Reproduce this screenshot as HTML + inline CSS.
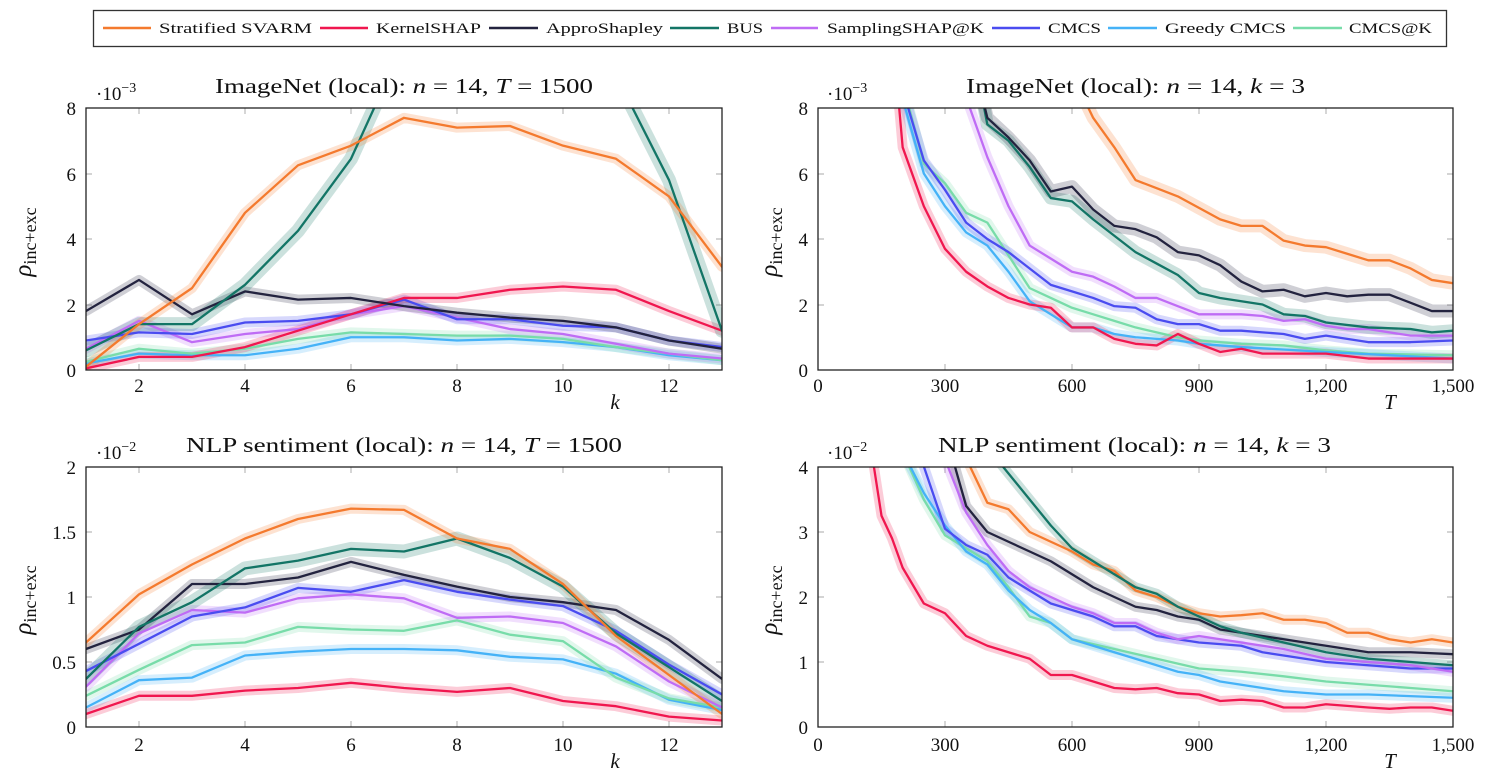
<!DOCTYPE html>
<html><head><meta charset="utf-8"><style>
body{margin:0;background:#fff;width:1499px;height:776px;overflow:hidden}
svg{display:block;font-family:"Liberation Serif",serif}
defs polyline{fill:none;vector-effect:non-scaling-stroke;stroke-linejoin:round;stroke-linecap:round}
.b{fill:none;stroke-width:10;stroke-opacity:.22}
.l{fill:none;stroke-width:2.3}
.tk{stroke:#bbb;stroke-width:1.2}
.ax{fill:none;stroke:#222;stroke-width:1.3}
.t{font-size:19px;fill:#111}
.ti{font-size:21px;fill:#111}
.lg{font-size:15px;fill:#111}
</style></head><body>
<svg width="1499" height="776" viewBox="0 0 1499 776">
<defs>
<clipPath id="c1"><rect x="86" y="108" width="636" height="262"/></clipPath>
<clipPath id="c2"><rect x="818" y="108" width="635" height="262"/></clipPath>
<clipPath id="c3"><rect x="86" y="467" width="636" height="260"/></clipPath>
<clipPath id="c4"><rect x="818" y="467" width="635" height="260"/></clipPath>
</defs>

<!-- legend -->
<rect x="93.5" y="10.5" width="1353" height="36" fill="#fff" stroke="#333" stroke-width="1.3"/>
<g stroke-width="2.5">
<line x1="103" y1="28" x2="151" y2="28" stroke="#f47a2e"/>
<line x1="320" y1="28" x2="368" y2="28" stroke="#f0174f"/>
<line x1="489" y1="28" x2="538" y2="28" stroke="#23233f"/>
<line x1="670" y1="28" x2="719" y2="28" stroke="#137566"/>
<line x1="771" y1="28" x2="818" y2="28" stroke="#bf6cf5"/>
<line x1="992" y1="28" x2="1040" y2="28" stroke="#4a4cf0"/>
<line x1="1108" y1="28" x2="1157" y2="28" stroke="#45b2f7"/>
<line x1="1293" y1="28" x2="1342" y2="28" stroke="#78dca9"/>
</g>
<g class="lg">
<text x="159" y="33" textLength="153" lengthAdjust="spacingAndGlyphs">Stratified SVARM</text>
<text x="376" y="33" textLength="105" lengthAdjust="spacingAndGlyphs">KernelSHAP</text>
<text x="546" y="33" textLength="117" lengthAdjust="spacingAndGlyphs">ApproShapley</text>
<text x="727" y="33" textLength="36" lengthAdjust="spacingAndGlyphs">BUS</text>
<text x="827" y="33" textLength="157" lengthAdjust="spacingAndGlyphs">SamplingSHAP@K</text>
<text x="1048" y="33" textLength="53" lengthAdjust="spacingAndGlyphs">CMCS</text>
<text x="1165" y="33" textLength="121" lengthAdjust="spacingAndGlyphs">Greedy CMCS</text>
<text x="1349" y="33" textLength="83" lengthAdjust="spacingAndGlyphs">CMCS@K</text>
</g>

<!-- titles -->
<text class="ti" x="215" y="93" textLength="378" lengthAdjust="spacingAndGlyphs">ImageNet (local): <tspan font-style="italic">n</tspan> = 14, <tspan font-style="italic">T</tspan> = 1500</text>
<text class="ti" x="966" y="93" textLength="339" lengthAdjust="spacingAndGlyphs">ImageNet (local): <tspan font-style="italic">n</tspan> = 14, <tspan font-style="italic">k</tspan> = 3</text>
<text class="ti" x="186" y="452" textLength="436" lengthAdjust="spacingAndGlyphs">NLP sentiment (local): <tspan font-style="italic">n</tspan> = 14, <tspan font-style="italic">T</tspan> = 1500</text>
<text class="ti" x="938" y="452" textLength="393" lengthAdjust="spacingAndGlyphs">NLP sentiment (local): <tspan font-style="italic">n</tspan> = 14, <tspan font-style="italic">k</tspan> = 3</text>
<text class="t" x="96" y="100">·10<tspan font-size="14" dy="-8">−3</tspan></text>
<text class="t" x="827" y="100">·10<tspan font-size="14" dy="-8">−3</tspan></text>
<text class="t" x="96" y="459">·10<tspan font-size="14" dy="-8">−2</tspan></text>
<text class="t" x="827" y="459">·10<tspan font-size="14" dy="-8">−2</tspan></text>

<!-- y labels -->
<g class="t">
<text transform="translate(31,242) rotate(-90)" text-anchor="middle" font-style="italic" font-size="25">ρ<tspan font-style="normal" font-size="18" dy="5">inc+exc</tspan></text>
<text transform="translate(777,242) rotate(-90)" text-anchor="middle" font-style="italic" font-size="25">ρ<tspan font-style="normal" font-size="18" dy="5">inc+exc</tspan></text>
<text transform="translate(31,600) rotate(-90)" text-anchor="middle" font-style="italic" font-size="25">ρ<tspan font-style="normal" font-size="18" dy="5">inc+exc</tspan></text>
<text transform="translate(777,600) rotate(-90)" text-anchor="middle" font-style="italic" font-size="25">ρ<tspan font-style="normal" font-size="18" dy="5">inc+exc</tspan></text>
</g>

<!-- tick labels -->
<g class="t" text-anchor="end">
<text x="76" y="115">8</text><text x="76" y="181">6</text><text x="76" y="246">4</text><text x="76" y="312">2</text><text x="76" y="377">0</text>
<text x="808" y="115">8</text><text x="808" y="181">6</text><text x="808" y="246">4</text><text x="808" y="312">2</text><text x="808" y="377">0</text>
<text x="76" y="474">2</text><text x="76" y="539">1.5</text><text x="76" y="604">1</text><text x="76" y="669">0.5</text><text x="76" y="734">0</text>
<text x="808" y="474">4</text><text x="808" y="539">3</text><text x="808" y="604">2</text><text x="808" y="669">1</text><text x="808" y="734">0</text>
</g>
<g class="t" text-anchor="middle">
<text x="139" y="392">2</text><text x="245" y="392">4</text><text x="351" y="392">6</text><text x="457" y="392">8</text><text x="563" y="392">10</text><text x="669" y="392">12</text>
<text x="139" y="751">2</text><text x="245" y="751">4</text><text x="351" y="751">6</text><text x="457" y="751">8</text><text x="563" y="751">10</text><text x="669" y="751">12</text>
<text x="818" y="392">0</text><text x="945" y="392">300</text><text x="1072" y="392">600</text><text x="1199" y="392">900</text><text x="1326" y="392">1,200</text><text x="1453" y="392">1,500</text>
<text x="818" y="751">0</text><text x="945" y="751">300</text><text x="1072" y="751">600</text><text x="1199" y="751">900</text><text x="1326" y="751">1,200</text><text x="1453" y="751">1,500</text>
<text x="615" y="409" font-style="italic" font-size="21">k</text>
<text x="615" y="768" font-style="italic" font-size="21">k</text>
<text x="1390" y="409" font-style="italic" font-size="21">T</text>
<text x="1390" y="768" font-style="italic" font-size="21">T</text>
</g>

<!-- ticks -->
<g class="tk">
<path d="M139 108v6M245 108v6M351 108v6M457 108v6M563 108v6M669 108v6M139 370v-6M245 370v-6M351 370v-6M457 370v-6M563 370v-6M669 370v-6M86 174h6M86 239h6M86 305h6M722 174h-6M722 239h-6M722 305h-6"/>
<path d="M139 467v6M245 467v6M351 467v6M457 467v6M563 467v6M669 467v6M139 727v-6M245 727v-6M351 727v-6M457 727v-6M563 727v-6M669 727v-6M86 532h6M86 597h6M86 662h6M722 532h-6M722 597h-6M722 662h-6"/>
<path d="M945 108v6M1072 108v6M1199 108v6M1326 108v6M945 370v-6M1072 370v-6M1199 370v-6M1326 370v-6M818 174h6M818 239h6M818 305h6M1453 174h-6M1453 239h-6M1453 305h-6"/>
<path d="M945 467v6M1072 467v6M1199 467v6M1326 467v6M945 727v-6M1072 727v-6M1199 727v-6M1326 727v-6M818 532h6M818 597h6M818 662h6M1453 532h-6M1453 597h-6M1453 662h-6"/>
</g>

<defs>
<polyline id="a1" fill="none" vector-effect="non-scaling-stroke" points="1,0.1 2,1.4 3,2.5 4,4.8 5,6.25 6,6.85 7,7.7 8,7.4 9,7.45 10,6.85 11,6.45 12,5.3 13,3.15"/>
<polyline id="a2" fill="none" vector-effect="non-scaling-stroke" points="1,0.05 2,0.4 3,0.4 4,0.7 5,1.2 6,1.7 7,2.2 8,2.2 9,2.45 10,2.55 11,2.45 12,1.8 13,1.2"/>
<polyline id="a3" fill="none" vector-effect="non-scaling-stroke" points="1,1.8 2,2.75 3,1.7 4,2.4 5,2.15 6,2.2 7,1.95 8,1.75 9,1.6 10,1.5 11,1.3 12,0.9 13,0.65"/>
<polyline id="a4" fill="none" vector-effect="non-scaling-stroke" points="1,0.6 2,1.4 3,1.4 4,2.6 5,4.25 6,6.45 7,10 8,12 9,12 10,12 10.5,11 11,9 12,5.8 13,1.2"/>
<polyline id="a5" fill="none" vector-effect="non-scaling-stroke" points="1,0.65 2,1.5 3,0.85 4,1.1 5,1.25 6,1.7 7,1.95 8,1.6 9,1.25 10,1.1 11,0.8 12,0.5 13,0.35"/>
<polyline id="a6" fill="none" vector-effect="non-scaling-stroke" points="1,0.9 2,1.15 3,1.1 4,1.45 5,1.5 6,1.7 7,2.15 8,1.55 9,1.55 10,1.35 11,1.3 12,0.9 13,0.7"/>
<polyline id="a7" fill="none" vector-effect="non-scaling-stroke" points="1,0.2 2,0.5 3,0.45 4,0.45 5,0.65 6,1.0 7,1.0 8,0.9 9,0.95 10,0.85 11,0.7 12,0.45 13,0.3"/>
<polyline id="a8" fill="none" vector-effect="non-scaling-stroke" points="1,0.25 2,0.65 3,0.5 4,0.65 5,0.95 6,1.15 7,1.1 8,1.05 9,1.05 10,0.95 11,0.7 12,0.5 13,0.3"/>

<polyline id="b1" fill="none" vector-effect="non-scaling-stroke" points="620,8.5 650,7.7 700,6.8 750,5.8 800,5.55 850,5.3 900,4.95 950,4.6 1000,4.4 1050,4.4 1100,3.95 1150,3.8 1200,3.75 1250,3.55 1300,3.35 1350,3.35 1400,3.1 1450,2.75 1500,2.65"/>
<polyline id="b2" fill="none" vector-effect="non-scaling-stroke" points="185,9 200,6.8 250,5 300,3.7 350,3.0 400,2.55 450,2.2 500,2.0 550,1.9 600,1.3 650,1.3 700,0.95 750,0.8 800,0.75 850,1.1 900,0.8 950,0.55 1000,0.65 1050,0.5 1100,0.5 1200,0.5 1300,0.35 1400,0.35 1500,0.35"/>
<polyline id="b3" fill="none" vector-effect="non-scaling-stroke" points="385,8.5 400,7.7 450,7.1 500,6.4 550,5.45 600,5.6 650,4.9 700,4.4 750,4.3 800,4.05 850,3.6 900,3.5 950,3.2 1000,2.7 1050,2.4 1100,2.45 1150,2.25 1200,2.35 1250,2.25 1300,2.3 1350,2.3 1400,2.05 1450,1.8 1500,1.8"/>
<polyline id="b4" fill="none" vector-effect="non-scaling-stroke" points="385,8.5 400,7.5 450,7 500,6.2 550,5.25 600,5.15 650,4.6 700,4.1 750,3.6 800,3.25 850,2.9 900,2.35 950,2.2 1000,2.1 1050,2.0 1100,1.7 1150,1.65 1200,1.45 1300,1.3 1400,1.25 1450,1.15 1500,1.2"/>
<polyline id="b5" fill="none" vector-effect="non-scaling-stroke" points="345,8.5 400,6.5 450,5 500,3.8 550,3.4 600,3.0 650,2.85 700,2.55 750,2.2 800,2.2 850,1.95 900,1.7 1000,1.7 1050,1.65 1100,1.5 1150,1.55 1200,1.35 1250,1.25 1300,1.25 1400,1.05 1500,1.05"/>
<polyline id="b6" fill="none" vector-effect="non-scaling-stroke" points="190,9 250,6.4 300,5.5 350,4.5 400,4.0 450,3.6 500,3.1 550,2.6 600,2.4 650,2.2 700,1.95 750,1.9 800,1.55 850,1.4 900,1.4 950,1.2 1000,1.2 1050,1.15 1100,1.1 1150,0.95 1200,1.05 1250,0.95 1300,0.85 1400,0.85 1500,0.9"/>
<polyline id="b7" fill="none" vector-effect="non-scaling-stroke" points="195,8.5 250,6 300,5 350,4.2 400,3.8 450,3.0 500,2.1 550,1.7 600,1.3 650,1.3 700,1.1 750,1.0 800,0.95 850,0.9 900,0.8 1000,0.7 1200,0.55 1500,0.35"/>
<polyline id="b8" fill="none" vector-effect="non-scaling-stroke" points="195,9 250,6.3 300,5.7 350,4.8 400,4.5 450,3.5 500,2.5 550,2.2 600,1.9 650,1.7 700,1.5 750,1.3 800,1.15 850,1.0 900,0.9 1000,0.8 1100,0.75 1200,0.6 1300,0.5 1500,0.45"/>

<polyline id="c1p" fill="none" vector-effect="non-scaling-stroke" points="1,0.65 2,1.02 3,1.25 4,1.45 5,1.6 6,1.68 7,1.67 8,1.45 9,1.37 10,1.1 11,0.7 12,0.4 13,0.1"/>
<polyline id="c2p" fill="none" vector-effect="non-scaling-stroke" points="1,0.1 2,0.24 3,0.24 4,0.28 5,0.3 6,0.34 7,0.3 8,0.27 9,0.3 10,0.2 11,0.16 12,0.08 13,0.05"/>
<polyline id="c3p" fill="none" vector-effect="non-scaling-stroke" points="1,0.6 2,0.75 3,1.1 4,1.1 5,1.15 6,1.27 7,1.17 8,1.08 9,1.0 10,0.96 11,0.9 12,0.67 13,0.37"/>
<polyline id="c4p" fill="none" vector-effect="non-scaling-stroke" points="1,0.37 2,0.77 3,0.96 4,1.22 5,1.28 6,1.37 7,1.35 8,1.45 9,1.3 10,1.08 11,0.72 12,0.46 13,0.2"/>
<polyline id="c5p" fill="none" vector-effect="non-scaling-stroke" points="1,0.31 2,0.72 3,0.9 4,0.88 5,0.99 6,1.02 7,0.99 8,0.84 9,0.85 10,0.8 11,0.62 12,0.35 13,0.15"/>
<polyline id="c6p" fill="none" vector-effect="non-scaling-stroke" points="1,0.43 2,0.64 3,0.85 4,0.92 5,1.07 6,1.04 7,1.13 8,1.04 9,0.98 10,0.93 11,0.74 12,0.48 13,0.25"/>
<polyline id="c7p" fill="none" vector-effect="non-scaling-stroke" points="1,0.15 2,0.36 3,0.38 4,0.55 5,0.58 6,0.6 7,0.6 8,0.59 9,0.54 10,0.52 11,0.41 12,0.21 13,0.13"/>
<polyline id="c8p" fill="none" vector-effect="non-scaling-stroke" points="1,0.24 2,0.44 3,0.63 4,0.65 5,0.77 6,0.75 7,0.74 8,0.82 9,0.71 10,0.66 11,0.38 12,0.22 13,0.15"/>

<polyline id="d1" fill="none" vector-effect="non-scaling-stroke" points="345,4.2 400,3.45 450,3.35 500,3.0 550,2.85 600,2.7 650,2.5 700,2.4 750,2.1 800,2.0 850,1.85 900,1.75 950,1.7 1000,1.72 1050,1.75 1100,1.65 1150,1.65 1200,1.6 1250,1.45 1300,1.45 1350,1.35 1400,1.3 1450,1.35 1500,1.3"/>
<polyline id="d2" fill="none" vector-effect="non-scaling-stroke" points="125,4.3 150,3.25 175,2.9 200,2.45 250,1.9 300,1.75 350,1.4 400,1.25 450,1.15 500,1.05 550,0.8 600,0.8 650,0.7 700,0.6 750,0.58 800,0.6 850,0.52 900,0.5 950,0.4 1000,0.42 1050,0.4 1100,0.3 1150,0.3 1200,0.35 1300,0.3 1350,0.28 1400,0.3 1450,0.3 1500,0.25"/>
<polyline id="d3" fill="none" vector-effect="non-scaling-stroke" points="315,4.2 350,3.4 400,3.0 450,2.85 500,2.7 550,2.55 600,2.35 650,2.15 700,2.0 750,1.85 800,1.8 850,1.7 900,1.65 950,1.5 1000,1.45 1050,1.4 1100,1.35 1200,1.25 1300,1.15 1400,1.15 1500,1.12"/>
<polyline id="d4" fill="none" vector-effect="non-scaling-stroke" points="425,4.1 450,3.9 500,3.5 550,3.1 600,2.75 650,2.55 700,2.35 750,2.15 800,2.05 850,1.85 900,1.7 950,1.55 1000,1.45 1100,1.3 1200,1.15 1300,1.05 1400,1.0 1500,0.95"/>
<polyline id="d5" fill="none" vector-effect="non-scaling-stroke" points="295,4.2 350,3.3 400,2.8 450,2.4 500,2.15 550,2.0 600,1.85 650,1.75 700,1.6 750,1.6 800,1.45 850,1.35 900,1.4 1000,1.3 1100,1.2 1200,1.05 1300,1.0 1400,0.95 1500,0.85"/>
<polyline id="d6" fill="none" vector-effect="non-scaling-stroke" points="240,4.2 300,3.05 350,2.8 400,2.65 450,2.3 500,2.1 550,1.9 600,1.8 650,1.7 700,1.55 750,1.55 800,1.4 850,1.35 900,1.3 1000,1.25 1050,1.15 1100,1.1 1200,1.0 1300,0.95 1400,0.9 1500,0.9"/>
<polyline id="d7" fill="none" vector-effect="non-scaling-stroke" points="195,4.3 250,3.6 300,3.1 350,2.7 400,2.5 450,2.1 500,1.8 550,1.6 600,1.35 650,1.25 700,1.15 750,1.05 800,0.95 850,0.85 900,0.8 950,0.7 1000,0.65 1050,0.6 1100,0.55 1200,0.5 1300,0.5 1500,0.45"/>
<polyline id="d8" fill="none" vector-effect="non-scaling-stroke" points="195,4.3 250,3.5 300,2.95 350,2.75 400,2.55 450,2.15 500,1.7 550,1.6 600,1.35 700,1.2 800,1.05 900,0.9 1000,0.85 1100,0.78 1200,0.7 1300,0.65 1400,0.6 1500,0.55"/>
</defs>

<g clip-path="url(#c1)"><g transform="translate(86,370) scale(53,-32.75) translate(-1,0)">
<use href="#a7" class="b" stroke="#45b2f7"/><use href="#a8" class="b" stroke="#78dca9"/><use href="#a5" class="b" stroke="#bf6cf5"/><use href="#a6" class="b" stroke="#4a4cf0"/><use href="#a2" class="b" stroke="#f0174f"/><use href="#a3" class="b" stroke="#23233f"/><use href="#a4" class="b" stroke="#137566" style="stroke-width:14"/><use href="#a1" class="b" stroke="#f47a2e"/>
<use href="#a7" class="l" stroke="#45b2f7"/><use href="#a8" class="l" stroke="#78dca9"/><use href="#a5" class="l" stroke="#bf6cf5"/><use href="#a6" class="l" stroke="#4a4cf0"/><use href="#a2" class="l" stroke="#f0174f"/><use href="#a3" class="l" stroke="#23233f"/><use href="#a4" class="l" stroke="#137566"/><use href="#a1" class="l" stroke="#f47a2e"/>
</g></g>

<g clip-path="url(#c2)"><g transform="translate(818,370) scale(0.42333,-32.75)">
<use href="#b8" class="b" stroke="#78dca9"/><use href="#b7" class="b" stroke="#45b2f7"/><use href="#b6" class="b" stroke="#4a4cf0"/><use href="#b5" class="b" stroke="#bf6cf5"/><use href="#b2" class="b" stroke="#f0174f"/><use href="#b4" class="b" stroke="#137566" style="stroke-width:13"/><use href="#b3" class="b" stroke="#23233f" style="stroke-width:13"/><use href="#b1" class="b" stroke="#f47a2e" style="stroke-width:13"/>
<use href="#b8" class="l" stroke="#78dca9"/><use href="#b7" class="l" stroke="#45b2f7"/><use href="#b6" class="l" stroke="#4a4cf0"/><use href="#b5" class="l" stroke="#bf6cf5"/><use href="#b2" class="l" stroke="#f0174f"/><use href="#b4" class="l" stroke="#137566"/><use href="#b3" class="l" stroke="#23233f"/><use href="#b1" class="l" stroke="#f47a2e"/>
</g></g>

<g clip-path="url(#c3)"><g transform="translate(86,727) scale(53,-130) translate(-1,0)">
<use href="#c7p" class="b" stroke="#45b2f7"/><use href="#c8p" class="b" stroke="#78dca9"/><use href="#c2p" class="b" stroke="#f0174f"/><use href="#c5p" class="b" stroke="#bf6cf5"/><use href="#c6p" class="b" stroke="#4a4cf0"/><use href="#c3p" class="b" stroke="#23233f"/><use href="#c4p" class="b" stroke="#137566" style="stroke-width:14"/><use href="#c1p" class="b" stroke="#f47a2e"/>
<use href="#c7p" class="l" stroke="#45b2f7"/><use href="#c8p" class="l" stroke="#78dca9"/><use href="#c2p" class="l" stroke="#f0174f"/><use href="#c5p" class="l" stroke="#bf6cf5"/><use href="#c6p" class="l" stroke="#4a4cf0"/><use href="#c3p" class="l" stroke="#23233f"/><use href="#c4p" class="l" stroke="#137566"/><use href="#c1p" class="l" stroke="#f47a2e"/>
</g></g>

<g clip-path="url(#c4)"><g transform="translate(818,727) scale(0.42333,-65)">
<use href="#d8" class="b" stroke="#78dca9"/><use href="#d7" class="b" stroke="#45b2f7"/><use href="#d2" class="b" stroke="#f0174f"/><use href="#d6" class="b" stroke="#4a4cf0"/><use href="#d5" class="b" stroke="#bf6cf5"/><use href="#d3" class="b" stroke="#23233f"/><use href="#d1" class="b" stroke="#f47a2e"/><use href="#d4" class="b" stroke="#137566"/>
<use href="#d8" class="l" stroke="#78dca9"/><use href="#d7" class="l" stroke="#45b2f7"/><use href="#d2" class="l" stroke="#f0174f"/><use href="#d6" class="l" stroke="#4a4cf0"/><use href="#d5" class="l" stroke="#bf6cf5"/><use href="#d3" class="l" stroke="#23233f"/><use href="#d1" class="l" stroke="#f47a2e"/><use href="#d4" class="l" stroke="#137566"/>
</g></g>

<!-- axes frames -->
<rect class="ax" x="86" y="108" width="636" height="262"/>
<rect class="ax" x="818" y="108" width="635" height="262"/>
<rect class="ax" x="86" y="467" width="636" height="260"/>
<rect class="ax" x="818" y="467" width="635" height="260"/>
</svg>
</body></html>
